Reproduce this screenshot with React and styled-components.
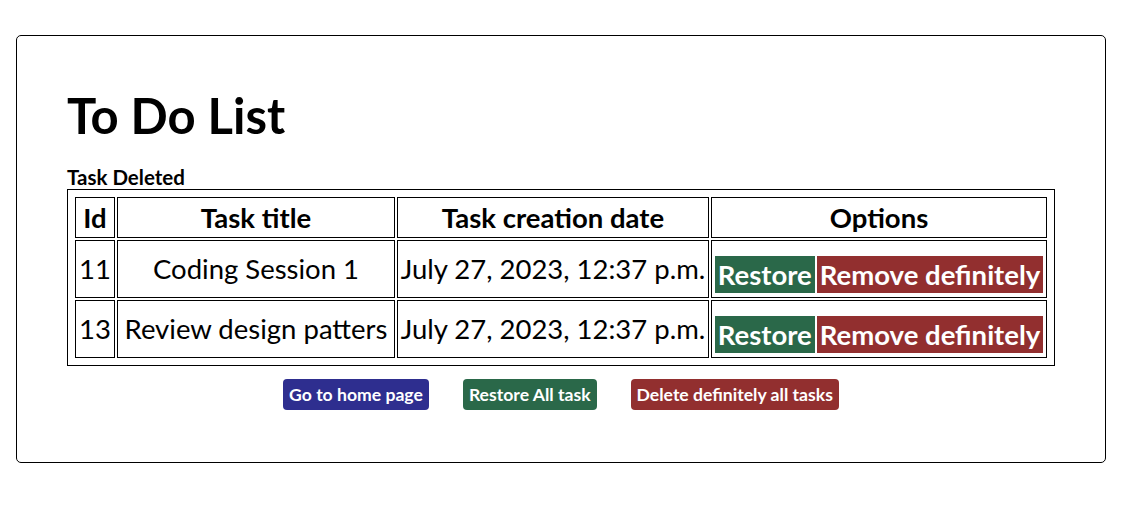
import React from "react";
import styled, { createGlobalStyle } from "styled-components";

const GlobalStyle = createGlobalStyle`
  body {
    margin: 0;
    background: #fff;
    font-family: Lato, "Open Sans", sans-serif;
    color: #000;
  }
`;

const Card = styled.div`
  box-sizing: border-box;
  width: 1090px;
  margin: 35px 0 0 16px;
  padding: 50px 50px 52px;
  border: 1px solid #000;
  border-radius: 5px;
`;

const Title = styled.h1`
  margin: 0 0 21px;
  font-size: 49px;
  font-weight: 700;
  line-height: 1.2;
`;

const Notice = styled.div`
  font-size: 20.5px;
  font-weight: 700;
  line-height: 23px;
`;

const Table = styled.table`
  box-sizing: border-box;
  width: 100%;
  table-layout: fixed;
  border: 1px solid #000;
  border-spacing: 2px;
  padding: 5px;
`;

const Th = styled.th`
  border: 1px solid #000;
  padding: 4px 2px;
  font-size: 27.5px;
  font-weight: 700;
  line-height: 31px;
  text-align: center;
`;

const Td = styled.td`
  border: 1px solid #000;
  height: 58px;
  box-sizing: border-box;
  padding: 3px 2px;
  font-size: 27.5px;
  line-height: 31px;
  text-align: center;
  vertical-align: middle;
  white-space: nowrap;
`;

const RowActions = styled.div`
  display: flex;
  justify-content: center;
  gap: 2px;
  margin-top: 11px;
`;

const RowButton = styled.button`
  border: none;
  border-radius: 0;
  padding: 3px 3px;
  font-family: Lato, sans-serif;
  font-size: 27.5px;
  font-weight: 700;
  line-height: 31px;
  color: #fff;
  background: ${(p) => p.$bg};
  cursor: pointer;
`;

const Footer = styled.div`
  display: flex;
  justify-content: center;
  gap: 34px;
  margin-top: 13px;
`;

const FooterButton = styled.button`
  box-sizing: border-box;
  height: 31px;
  border: none;
  border-radius: 4px;
  padding: 0 6px;
  font-family: Lato, sans-serif;
  font-size: 17.6px;
  font-weight: 700;
  line-height: 31px;
  color: #fff;
  background: ${(p) => p.$bg};
  cursor: pointer;
`;

const GREEN = "#2a6849";
const RED = "#922f2f";
const BLUE = "#2e2e8f";

const tasks = [
  { id: 11, title: "Coding Session 1", date: "July 27, 2023, 12:37 p.m." },
  { id: 13, title: "Review design patters", date: "July 27, 2023, 12:37 p.m." },
];

export default function App() {
  return (
    <>
      <GlobalStyle />
      <Card>
        <Title>To Do List</Title>
        <Notice>Task Deleted</Notice>
        <Table>
          <colgroup>
            <col style={{ width: 40 }} />
            <col style={{ width: 278 }} />
            <col style={{ width: 312 }} />
            <col style={{ width: 336 }} />
          </colgroup>
          <thead>
            <tr>
              <Th>Id</Th>
              <Th>Task title</Th>
              <Th>Task creation date</Th>
              <Th>Options</Th>
            </tr>
          </thead>
          <tbody>
            {tasks.map((t) => (
              <tr key={t.id}>
                <Td>{t.id}</Td>
                <Td>{t.title}</Td>
                <Td>{t.date}</Td>
                <Td>
                  <RowActions>
                    <RowButton $bg={GREEN}>Restore</RowButton>
                    <RowButton $bg={RED}>Remove definitely</RowButton>
                  </RowActions>
                </Td>
              </tr>
            ))}
          </tbody>
        </Table>
        <Footer>
          <FooterButton $bg={BLUE}>Go to home page</FooterButton>
          <FooterButton $bg={GREEN}>Restore All task</FooterButton>
          <FooterButton $bg={RED}>Delete definitely all tasks</FooterButton>
        </Footer>
      </Card>
    </>
  );
}
